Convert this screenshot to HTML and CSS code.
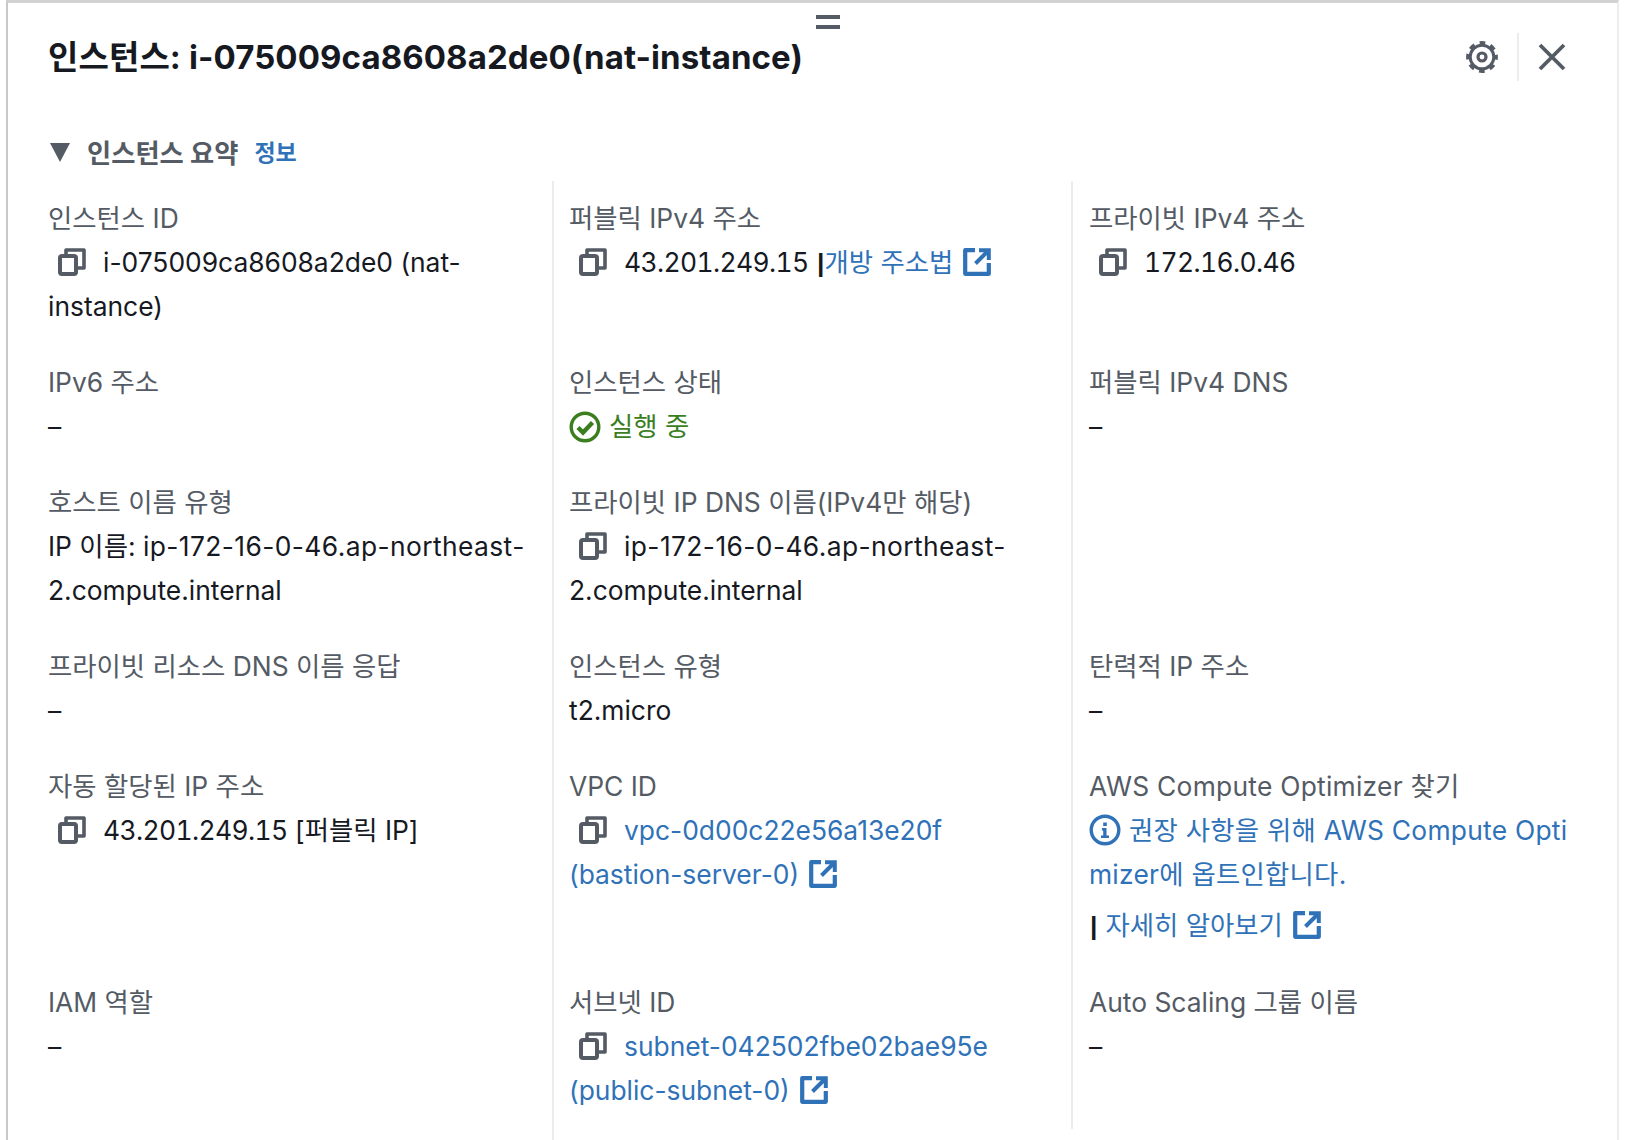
FILE: index.html
```html
<!DOCTYPE html>
<html lang="ko">
<head>
  <meta charset="UTF-8">
  <meta name="viewport" content="width=device-width, initial-scale=1.0">
  <title>인스턴스 요약</title>
  <link rel="stylesheet" href="styles.css">
</head>
<body>
  <svg class="defs" width="0" height="0" aria-hidden="true">
    <symbol id="icon-copy" viewBox="0 0 28 28">
      <path d="M8 7V2h18v18h-7" fill="none" stroke="currentColor" stroke-width="3.600" stroke-linejoin="round"/>
      <rect x="2" y="8" width="16" height="18" rx="2" fill="none" stroke="currentColor" stroke-width="4"/>
    </symbol>
    <symbol id="icon-external" viewBox="0 0 28 28">
      <path d="M12 2.200H2.200v23.600h23.600V15" fill="none" stroke="currentColor" stroke-width="4.200" stroke-linejoin="round"/>
      <path d="M16 2.200h9.800V12M25 3 12.500 15.500" fill="none" stroke="currentColor" stroke-width="4"/>
    </symbol>
  </svg>

  <div class="panel">
    <div class="grip"></div>

    <div class="panel-header">
      <h2>인스턴스: i-075009ca8608a2de0(nat-instance)</h2>
      <div class="panel-actions">
        <svg class="icon-settings" viewBox="0 0 32 32" fill="none" stroke="currentColor">
          <circle cx="16" cy="16" r="11.800" stroke-width="3"/>
          <circle cx="16" cy="16" r="14" stroke-width="3.800" stroke-dasharray="5.600 5.400" stroke-dashoffset="2.800"/>
          <circle cx="16" cy="16" r="4" stroke-width="3.200"/>
        </svg>
        <span class="action-divider"></span>
        <svg class="icon-close" viewBox="0 0 28 28">
          <path d="M2 2l24 24M26 2 2 26" fill="none" stroke="currentColor" stroke-width="3.800"/>
        </svg>
      </div>
    </div>

    <div class="section-title">
      <span class="caret"></span>
      <h3>인스턴스 요약</h3>
      <a class="info-link">정보</a>
    </div>

    <div class="details">
      <!-- row 1 -->
      <div class="cell">
        <div class="label">인스턴스 ID</div>
        <div class="value"><svg class="icon copy"><use href="#icon-copy"/></svg>i-075009ca8608a2de0 (nat-<br>instance)</div>
      </div>
      <div class="cell">
        <div class="label">퍼블릭 IPv4 주소</div>
        <div class="value"><svg class="icon copy"><use href="#icon-copy"/></svg><span class="num">43.201.249.15</span> <span class="pipe">|</span><a>개방 주소법<svg class="icon external"><use href="#icon-external"/></svg></a></div>
      </div>
      <div class="cell">
        <div class="label">프라이빗 IPv4 주소</div>
        <div class="value"><svg class="icon copy"><use href="#icon-copy"/></svg><span class="num">172.16.0.46</span></div>
      </div>

      <!-- row 2 -->
      <div class="cell">
        <div class="label">IPv6 주소</div>
        <div class="value">–</div>
      </div>
      <div class="cell">
        <div class="label">인스턴스 상태</div>
        <div class="value status-ok">
          <svg class="icon status-icon" viewBox="0 0 32 32">
            <circle cx="16" cy="16" r="13.800" fill="none" stroke="currentColor" stroke-width="3.400"/>
            <path d="M9 16.500l5 5 9.500-10" fill="none" stroke="currentColor" stroke-width="4.400"/>
          </svg>실행 중
        </div>
      </div>
      <div class="cell">
        <div class="label">퍼블릭 IPv4 DNS</div>
        <div class="value">–</div>
      </div>

      <!-- row 3 -->
      <div class="cell">
        <div class="label">호스트 이름 유형</div>
        <div class="value">IP 이름: <span class="host">ip-172-16-0-46.ap-northeast-</span><br>2.compute.internal</div>
      </div>
      <div class="cell">
        <div class="label">프라이빗 IP DNS 이름(IPv4만 해당)</div>
        <div class="value"><svg class="icon copy"><use href="#icon-copy"/></svg><span class="host">ip-172-16-0-46.ap-northeast-</span><br>2.compute.internal</div>
      </div>
      <div class="cell"></div>

      <!-- row 4 -->
      <div class="cell">
        <div class="label">프라이빗 리소스 DNS 이름 응답</div>
        <div class="value">–</div>
      </div>
      <div class="cell">
        <div class="label">인스턴스 유형</div>
        <div class="value">t2.micro</div>
      </div>
      <div class="cell">
        <div class="label">탄력적 IP 주소</div>
        <div class="value">–</div>
      </div>

      <!-- row 5 -->
      <div class="cell">
        <div class="label">자동 할당된 IP 주소</div>
        <div class="value"><svg class="icon copy"><use href="#icon-copy"/></svg><span class="num">43.201.249.15</span> [퍼블릭 IP]</div>
      </div>
      <div class="cell">
        <div class="label">VPC ID</div>
        <div class="value"><svg class="icon copy"><use href="#icon-copy"/></svg><a>vpc-0d00c22e56a13e20f<br>(bastion-server-0)<svg class="icon external"><use href="#icon-external"/></svg></a></div>
      </div>
      <div class="cell">
        <div class="label optimizer">AWS Compute Optimizer 찾기</div>
        <div class="value">
          <a class="optimizer">
            <svg class="icon info" viewBox="0 0 32 32">
              <circle cx="16" cy="16" r="13.800" fill="none" stroke="currentColor" stroke-width="3.400"/>
              <path d="M13 14h4.500v7.500H20v2.500h-8v-2.500h2.200V16.500H13zM14.200 8.500h3.600V12h-3.600z" fill="currentColor"/>
            </svg>권장 사항을 위해 AWS Compute Opti<br>mizer에 옵트인합니다.
          </a>
        </div>
        <div class="value learn-more"><span class="pipe">|</span><a>자세히 알아보기<svg class="icon external"><use href="#icon-external"/></svg></a></div>
      </div>

      <!-- row 6 -->
      <div class="cell">
        <div class="label">IAM 역할</div>
        <div class="value">–</div>
      </div>
      <div class="cell cell-tall">
        <div class="label">서브넷 ID</div>
        <div class="value"><svg class="icon copy"><use href="#icon-copy"/></svg><a>subnet-042502fbe02bae95e<br>(public-subnet-0)<svg class="icon external"><use href="#icon-external"/></svg></a></div>
      </div>
      <div class="cell cell-short">
        <div class="label">Auto Scaling 그룹 이름</div>
        <div class="value">–</div>
      </div>
    </div>
  </div>
</body>
</html>
```

FILE: styles.css
```css
:root {
  --text-primary: #16191f;
  --text-secondary: #545b64;
  --link-color: #2f72b8;
  --success-color: #3b7e1f;
  --border-color: #eaeded;
}

body {
  margin: 0;
  overflow: hidden;
  background: #fff;
  font-family: Inter, "Noto Sans CJK KR", sans-serif;
  color: var(--text-primary);
}

.defs {
  position: absolute;
}

.panel {
  position: relative;
  width: 1613px;
  height: 1140px;
  margin-left: 6px;
  box-sizing: border-box;
  border-top: 3px solid #d2d2d2;
  border-left: 2px solid #c9c9c9;
  border-right: 2px solid var(--border-color);
  padding-left: 40px;
  overflow: hidden;
}

.grip {
  position: absolute;
  left: 808px;
  top: 12px;
  width: 24px;
  height: 6px;
  border-top: 4px solid var(--text-secondary);
  border-bottom: 4px solid var(--text-secondary);
}

.panel-header {
  display: flex;
  align-items: center;
  justify-content: space-between;
  height: 52px;
  padding: 28px 51px 0 0;
}

.panel-header h2 {
  margin: 0;
  font-size: 33px;
  font-weight: 700;
  letter-spacing: 0.1px;
  line-height: 52px;
}

.panel-actions {
  display: flex;
  align-items: center;
  color: var(--text-secondary);
}

.icon-settings {
  width: 32px;
  height: 32px;
}

.action-divider {
  width: 2px;
  height: 48px;
  margin: 0 19px;
  background: var(--border-color);
}

.icon-close {
  width: 28px;
  height: 28px;
}

.section-title {
  display: flex;
  align-items: center;
  gap: 16px;
  height: 40px;
  margin-top: 48px;
}

.caret {
  width: 0;
  height: 0;
  margin: 2px 1px 0 2px;
  border-left: 10.5px solid transparent;
  border-right: 10.5px solid transparent;
  border-top: 19px solid var(--text-secondary);
}

.section-title h3 {
  margin: 0;
  font-size: 26.3px;
  font-weight: 700;
  color: var(--text-secondary);
}

.info-link {
  font-size: 23px;
  font-weight: 700;
  color: var(--link-color);
}

.details {
  display: grid;
  grid-template-columns: 504px 519px 521px;
  margin-top: 10px;
}

.cell {
  padding: 15px 20px 17px 0;
  min-width: 0;
}

.cell:nth-child(3n + 2) {
  padding-left: 15px;
  border-left: 2px solid var(--border-color);
}

.cell:nth-child(3n) {
  padding-left: 16px;
  border-left: 2px solid var(--border-color);
}

/* last row: the first rule runs on to the page edge, the second stops short */
.cell-tall {
  padding-bottom: 40px;
}

.cell-short {
  align-self: start;
  padding-bottom: 61px;
}

.label {
  font-size: 26.4px;
  line-height: 44px;
  color: var(--text-secondary);
}

.value {
  font-size: 26.4px;
  line-height: 44px;
  white-space: nowrap;
}

.value a {
  color: var(--link-color);
}

.num {
  font-variant-numeric: tabular-nums;
  letter-spacing: -0.6px;
}

.host {
  letter-spacing: 0.4px;
}

.optimizer {
  letter-spacing: 0.25px;
}

.pipe {
  margin-left: 1px;
  font-family: "Liberation Sans", sans-serif;
  font-weight: 700;
}

.learn-more {
  margin-top: 7px;
}

.learn-more .pipe {
  margin-right: 8px;
}

.icon {
  display: inline-block;
  vertical-align: -4px;
}

.copy {
  width: 28px;
  height: 28px;
  margin: 0 17px 0 10px;
  color: var(--text-secondary);
}

.external {
  width: 28px;
  height: 28px;
  margin-left: 10px;
  color: var(--link-color);
}

.status-ok {
  color: var(--success-color);
}

.status-icon {
  width: 32px;
  height: 32px;
  margin-right: 8px;
  vertical-align: -7px;
}

.info {
  width: 32px;
  height: 32px;
  margin-right: 8px;
  vertical-align: -6px;
}
```
